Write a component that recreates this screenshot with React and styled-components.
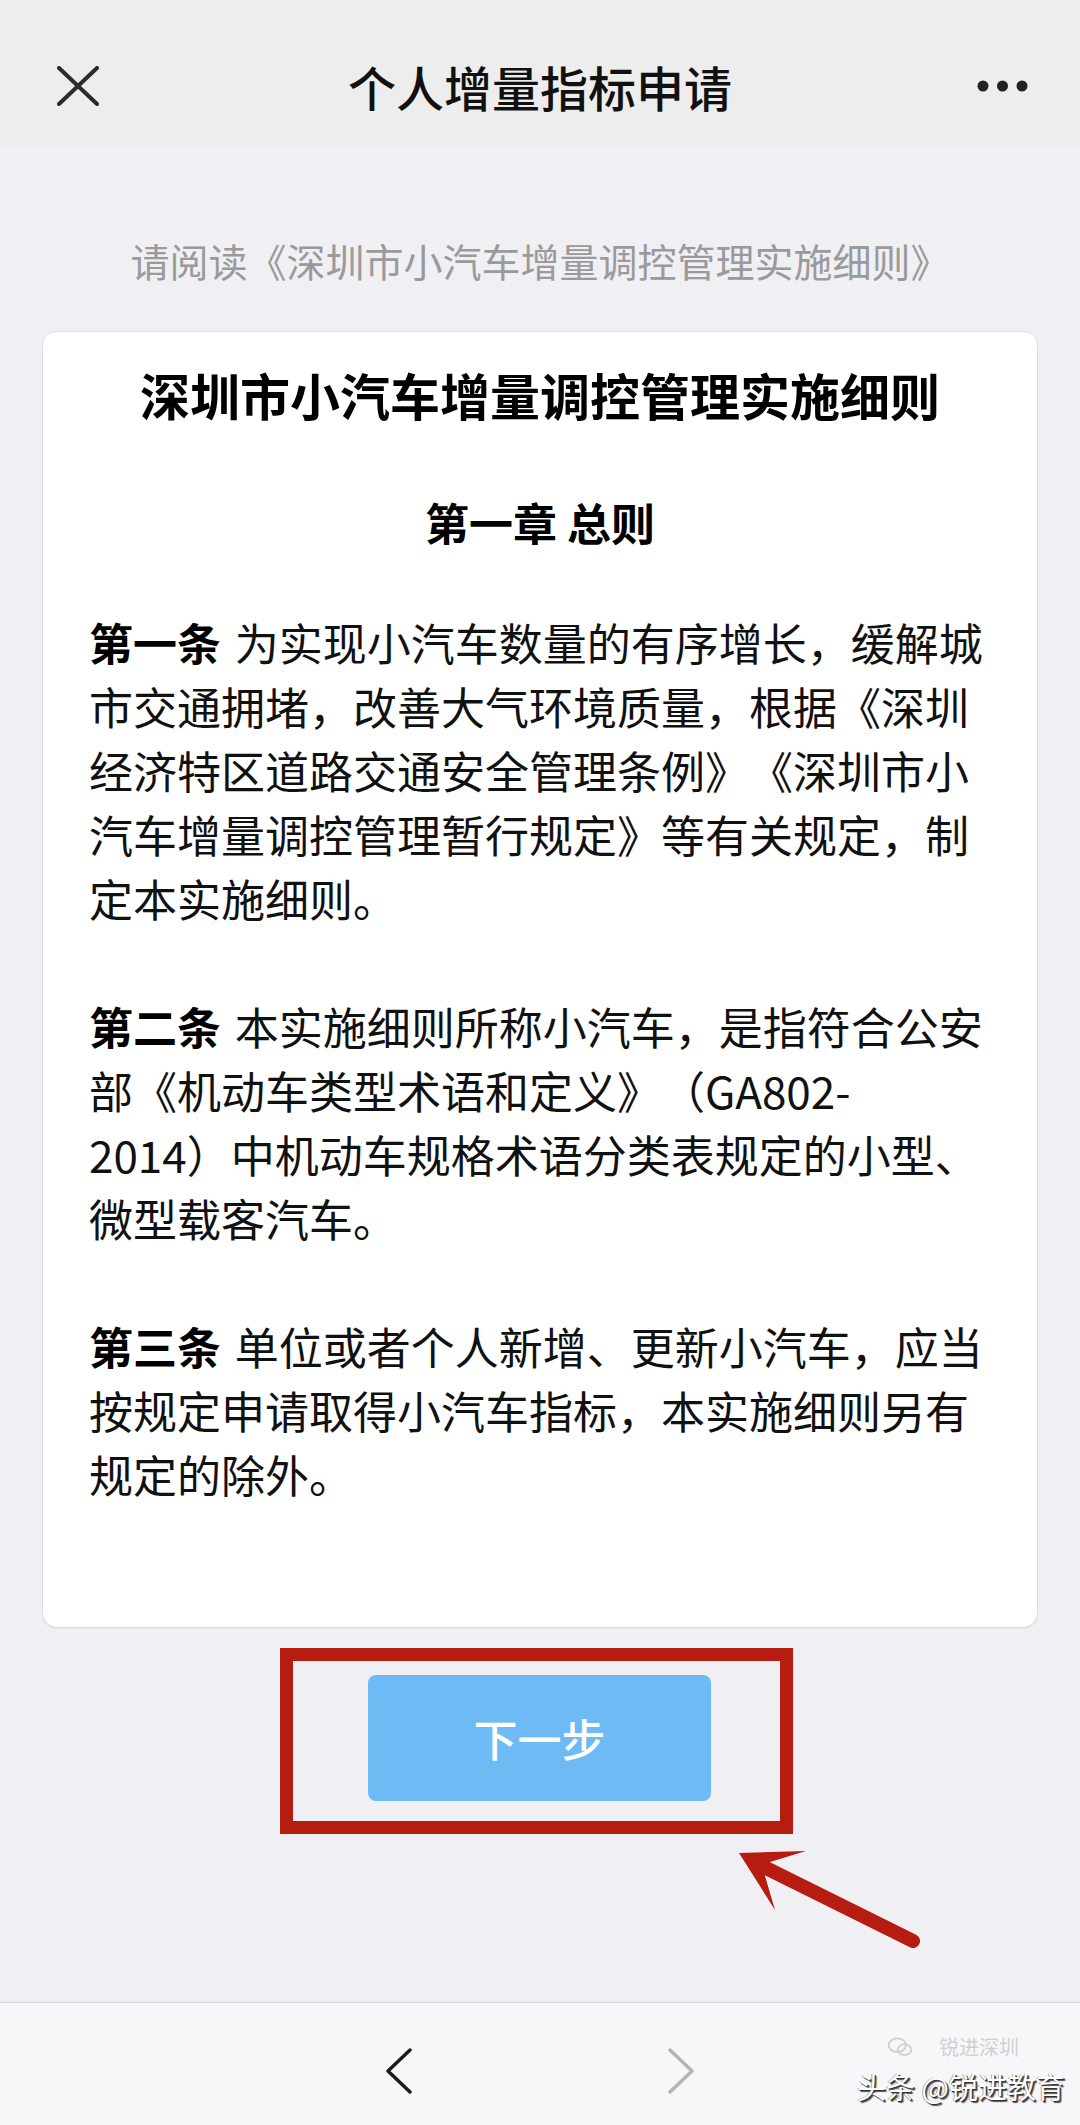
import React from "react";
import styled, { createGlobalStyle } from "styled-components";

const GlobalStyle = createGlobalStyle`
  html, body {
    margin: 0;
    padding: 0;
    background: #efeff4;
  }
  body {
    font-family: "Noto Sans CJK SC", "Noto Sans", sans-serif;
    color: #111;
    text-spacing-trim: space-all;
  }
  * { box-sizing: border-box; }
`;

const Page = styled.div`
  width: 1080px;
  min-height: 2125px;
  display: flex;
  flex-direction: column;
  background: #efeff4;
`;

const Header = styled.header`
  height: 146px;
  padding-top: 26px;
  background: #ededed;
  display: grid;
  grid-template-columns: 1fr auto 1fr;
  align-items: center;
`;

const HeaderLeft = styled.div`
  display: flex;
  align-items: center;
  padding-left: 57px;
`;

const HeaderRight = styled.div`
  display: flex;
  align-items: center;
  justify-content: flex-end;
  padding-right: 52px;
`;

const HeaderTitle = styled.h1`
  margin: 0;
  font-size: 48px;
  font-weight: 500;
  line-height: 64px;
  color: #111;
`;

const Main = styled.main`
  flex: 1;
  display: flex;
  flex-direction: column;
  align-items: center;
`;

const Notice = styled.p`
  margin: 88px 0 0;
  font-size: 39px;
  line-height: 52px;
  color: #9a9a9a;
  text-align: center;
  text-spacing-trim: space-all;
`;

const Card = styled.article`
  margin-top: 46px;
  width: 994px;
  background: #fff;
  border-radius: 14px;
  box-shadow: 0 0 0 1px rgba(0, 0, 0, 0.05), 0 1px 3px rgba(0, 0, 0, 0.08);
  padding: 27px 46px 121px;
`;

const CardTitle = styled.h2`
  margin: 0;
  font-size: 50px;
  line-height: 70px;
  font-weight: 700;
  text-align: center;
  color: #000;
`;

const Chapter = styled.h3`
  margin: 61px 0 0;
  font-size: 44px;
  line-height: 64px;
  font-weight: 700;
  text-align: center;
  color: #000;
`;

const Article = styled.p`
  margin: ${(p) => (p.$first ? "56px" : "64px")} 0 0;
  font-size: 44px;
  line-height: 64px;
  white-space: nowrap;
  color: #111;
  text-spacing-trim: space-all;
`;

const Lead = styled.strong`
  font-weight: 700;
  color: #000;
  margin-right: 4px;
`;

const ActionArea = styled.div`
  padding-top: 48px;
  display: flex;
  justify-content: center;
`;

const ButtonFrame = styled.div`
  position: relative;
  margin-left: -1px;
`;

const NextButton = styled.button`
  width: 343px;
  height: 126px;
  border: none;
  border-radius: 8px;
  background: #6dbaf5;
  color: #fff;
  font-family: inherit;
  font-size: 44px;
  font-weight: 500;
  display: flex;
  align-items: center;
  justify-content: center;
  cursor: pointer;
`;

/* red annotation box drawn around the button */
const Highlight = styled.div`
  position: absolute;
  left: -88px;
  top: -27px;
  right: -82px;
  bottom: -33px;
  border: 13px solid #b71c10;
  pointer-events: none;
`;

const Pointer = styled.svg`
  position: absolute;
  left: 352px;
  top: 165px;
  overflow: visible;
  pointer-events: none;
`;

const BottomBar = styled.footer`
  position: relative;
  height: 123px;
  border-top: 1px solid #d8d8dc;
  background: #f7f7f9;
  padding-top: 45px;
  display: flex;
  justify-content: center;
  gap: 254px;
`;

const NavIcon = styled.svg`
  display: block;
`;

const Watermark = styled.div`
  position: absolute;
  left: 857px;
  top: 68px;
  display: flex;
  flex-direction: column;
`;

/* faded account tag sitting just above the caption */
const WatermarkBack = styled.div`
  position: absolute;
  left: 30px;
  top: -34px;
  height: 20px;
  display: flex;
  align-items: center;
  gap: 26px;
  font-size: 20px;
  line-height: 20px;
  color: #cfcfd2;
  white-space: nowrap;
`;

const WatermarkText = styled.span`
  position: relative;
  font-size: 29px;
  line-height: 30px;
  color: #fff;
  white-space: nowrap;
  text-shadow: 1px 1px 0 #333, 2px 2px 1px #555, -1px 0 0 rgba(0,0,0,0.35);
`;

function CloseIcon() {
  return (
    <svg width="42" height="40" viewBox="0 0 42 40">
      <path d="M2 2 L40 38 M40 2 L2 38" stroke="#2b2b2b" strokeWidth="4" strokeLinecap="round" fill="none" />
    </svg>
  );
}

function MoreIcon() {
  return (
    <svg width="51" height="12" viewBox="0 0 51 12">
      <circle cx="6" cy="6" r="5.5" fill="#222" />
      <circle cx="25.5" cy="6" r="5.5" fill="#222" />
      <circle cx="45" cy="6" r="5.5" fill="#222" />
    </svg>
  );
}

function Chevron({ dir, color }) {
  const d = dir === "left" ? "M25 2 L3 23 L25 44" : "M3 2 L25 23 L3 44";
  return (
    <NavIcon width="28" height="46" viewBox="0 0 28 46">
      <path d={d} stroke={color} strokeWidth="3.5" strokeLinecap="round" strokeLinejoin="round" fill="none" />
    </NavIcon>
  );
}

function WeChatMark() {
  return (
    <svg width="26" height="20" viewBox="0 0 28 22">
      <ellipse cx="11" cy="9" rx="9.5" ry="7.5" fill="none" stroke="#cfcfd2" strokeWidth="2" />
      <ellipse cx="19" cy="14" rx="7.5" ry="6" fill="none" stroke="#cfcfd2" strokeWidth="2" />
    </svg>
  );
}

export default function App() {
  return (
    <>
      <GlobalStyle />
      <Page>
        <Header>
          <HeaderLeft>
            <CloseIcon />
          </HeaderLeft>
          <HeaderTitle>个人增量指标申请</HeaderTitle>
          <HeaderRight>
            <MoreIcon />
          </HeaderRight>
        </Header>

        <Main>
          <Notice>请阅读《深圳市小汽车增量调控管理实施细则》</Notice>

          <Card>
            <CardTitle>深圳市小汽车增量调控管理实施细则</CardTitle>
            <Chapter>第一章 总则</Chapter>
            <Article $first>
              <Lead>第一条</Lead> 为实现小汽车数量的有序增长，缓解城
              <br />
              市交通拥堵，改善大气环境质量，根据《深圳
              <br />
              经济特区道路交通安全管理条例》《深圳市小
              <br />
              汽车增量调控管理暂行规定》等有关规定，制
              <br />
              定本实施细则。
            </Article>
            <Article>
              <Lead>第二条</Lead> 本实施细则所称小汽车，是指符合公安
              <br />
              部《机动车类型术语和定义》（GA802-
              <br />
              2014）中机动车规格术语分类表规定的小型、
              <br />
              微型载客汽车。
            </Article>
            <Article>
              <Lead>第三条</Lead> 单位或者个人新增、更新小汽车，应当
              <br />
              按规定申请取得小汽车指标，本实施细则另有
              <br />
              规定的除外。
            </Article>
          </Card>

          <ActionArea>
            <ButtonFrame>
              <NextButton type="button">下一步</NextButton>
              <Highlight />
              <Pointer width="210" height="115" viewBox="0 0 210 115">
                <polygon points="19,13 86,11 50,22 45,36 55,70" fill="#b71c10" />
                <line x1="46" y1="28" x2="193" y2="101" stroke="#b71c10" strokeWidth="14" strokeLinecap="round" />
              </Pointer>
            </ButtonFrame>
          </ActionArea>
        </Main>

        <BottomBar>
          <Chevron dir="left" color="#1c1c1c" />
          <Chevron dir="right" color="#b4b4b6" />
          <Watermark>
            <WatermarkBack>
              <WeChatMark />
              <span>锐进深圳</span>
            </WatermarkBack>
            <WatermarkText>头条 @锐进教育</WatermarkText>
          </Watermark>
        </BottomBar>
      </Page>
    </>
  );
}
